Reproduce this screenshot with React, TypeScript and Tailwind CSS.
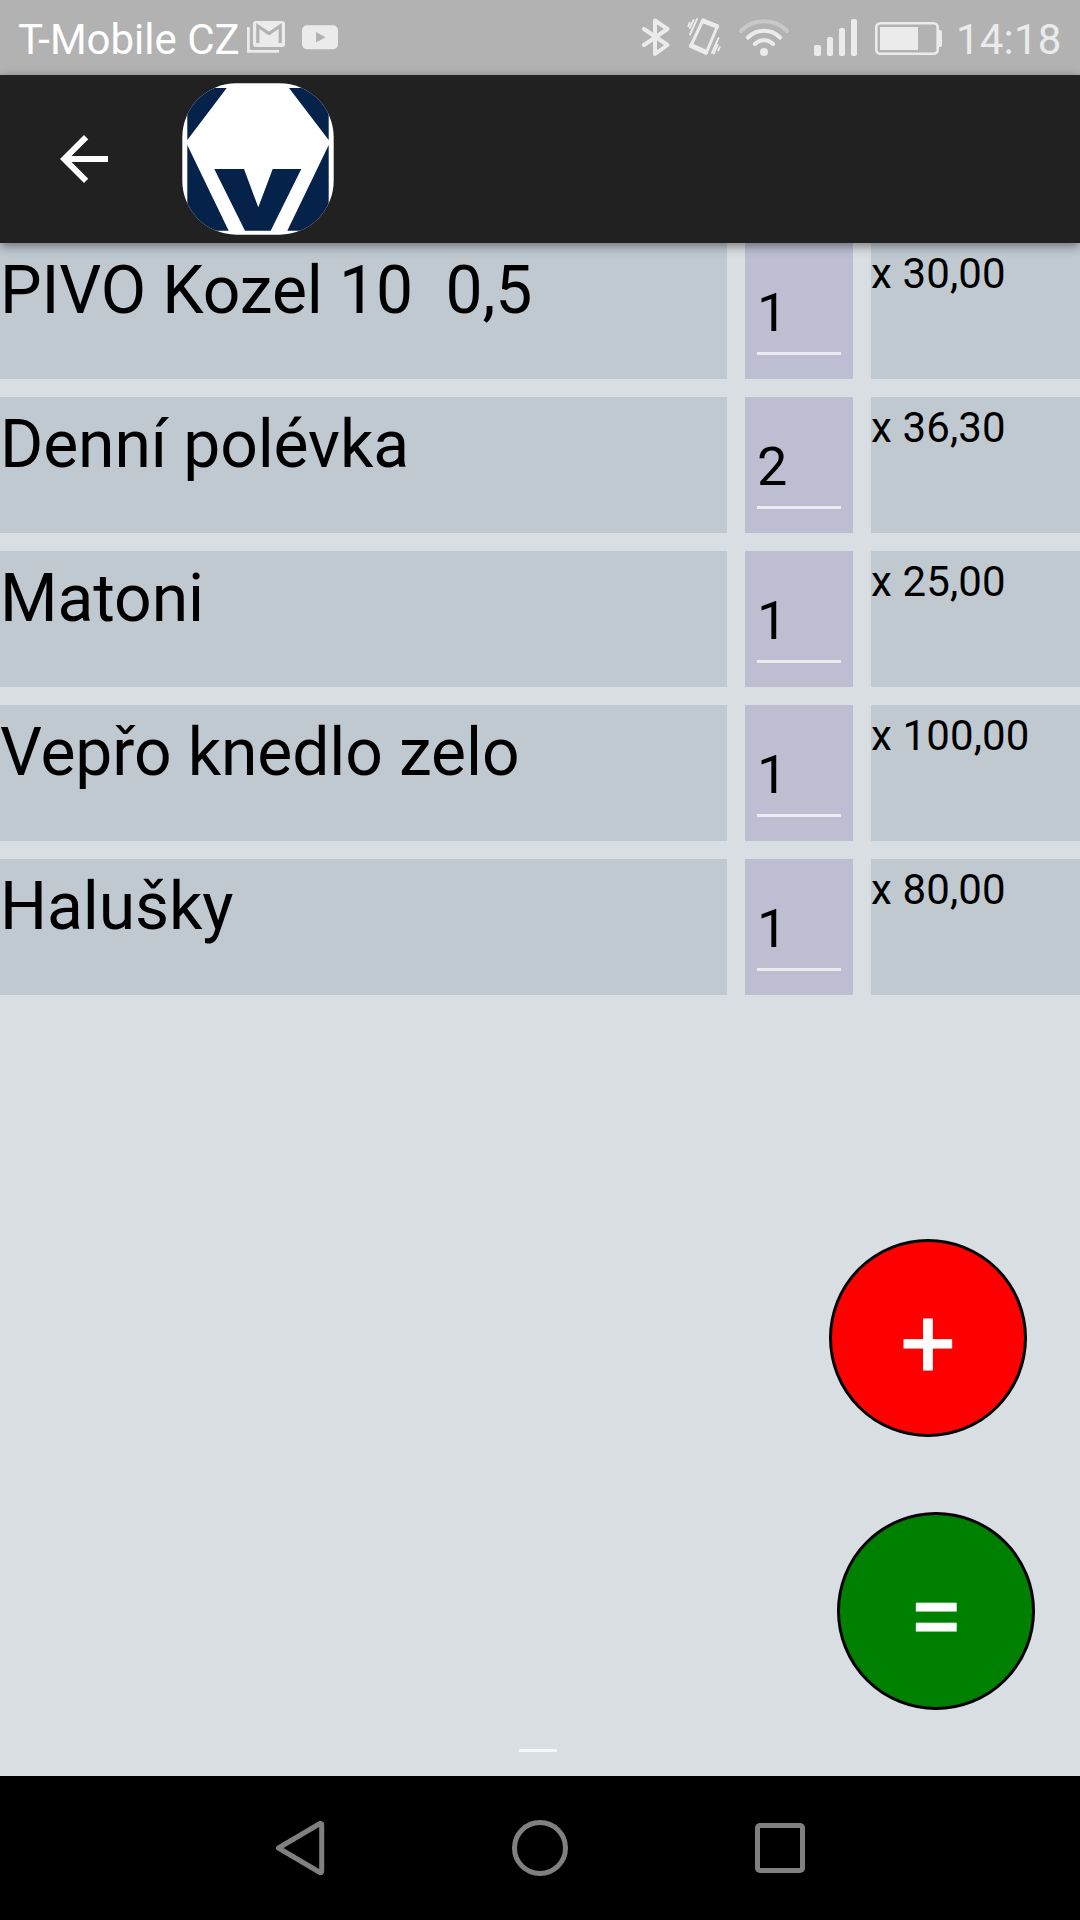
import React from 'react';

interface OrderItem {
  name: string;
  quantity: number;
  price: string;
}

const items: OrderItem[] = [
  { name: 'PIVO Kozel 10  0,5', quantity: 1, price: '30,00' },
  { name: 'Denní polévka', quantity: 2, price: '36,30' },
  { name: 'Matoni', quantity: 1, price: '25,00' },
  { name: 'Vepřo knedlo zelo', quantity: 1, price: '100,00' },
  { name: 'Halušky', quantity: 1, price: '80,00' },
];

const GmailIcon = () => (
  <svg className="w-[38px] h-[33px]" viewBox="0 0 38 33">
    <path d="M1.4 6v24.4H32" fill="none" stroke="#ebebeb" strokeWidth="2.8" />
    <rect x="6" y="0" width="32" height="26" rx="3" fill="#ebebeb" />
    <path d="M10.8 22V5L22 12.5L33.2 5V22" fill="none" stroke="#b2b2b2" strokeWidth="3.2" />
  </svg>
);

const YoutubeIcon = () => (
  <svg className="w-9 h-[25px]" viewBox="0 0 36 25">
    <rect x="0" y="0.3" width="36" height="24" rx="5" fill="#ebebeb" />
    <path d="M14 7v10.4l9.5-5.2z" fill="#b2b2b2" />
  </svg>
);

const BluetoothIcon = () => (
  <svg className="w-7 h-10" viewBox="0 0 28 40">
    <path d="M2 12L25.5 28L13 37V3.5L25.5 12L2 28" fill="none" stroke="#ebebeb" strokeWidth="4" strokeLinejoin="round" strokeLinecap="round" />
  </svg>
);

const VibrateIcon = () => (
  <svg className="w-[34px] h-10" viewBox="0 0 34 40" fill="none" stroke="#ebebeb" strokeLinecap="round">
    <path d="M16 3L30.5 9L19 36.5L3.5 29.5Z" strokeWidth="3" strokeLinejoin="round" />
    <path d="M16 4L30 9.5M4.5 28.5L19 35" strokeWidth="4.5" />
    <path d="M10 2L3 17.5M6.5 3L2.8 11M2.5 6L1.3 9M31.5 21L25 36M32.8 30L31.3 33.5M30.5 28L27 36.5" strokeWidth="1.9" />
  </svg>
);

const WifiIcon = () => (
  <svg className="w-[50px] h-10" viewBox="0 0 50 40" fill="none" strokeWidth="4.2" strokeLinecap="round">
    <path d="M2 13C14 0 36 0 48 13" stroke="#c8c8c8" />
    <path d="M9 19.5C17.5 10.5 32.5 10.5 41 19.5" stroke="#ebebeb" />
    <path d="M16 26C21 21 29 21 34 26" stroke="#ebebeb" />
    <circle cx="25" cy="34" r="4" fill="#ebebeb" stroke="none" />
  </svg>
);

const SignalIcon = () => (
  <svg className="w-11 h-[38px]" viewBox="0 0 44 38" fill="#ebebeb">
    <rect x="0" y="27" width="7" height="11" rx="2" />
    <rect x="13" y="19" width="6" height="19" rx="2" />
    <rect x="25" y="10" width="6" height="28" rx="2" />
    <rect x="37" y="1" width="6" height="37" rx="2" />
  </svg>
);

const BatteryIcon = () => (
  <svg className="w-[67px] h-[33px]" viewBox="0 0 67 33">
    <rect x="1.3" y="1.3" width="61.4" height="30.4" rx="4" fill="none" stroke="#ebebeb" strokeWidth="2.6" />
    <rect x="5" y="5" width="38" height="23" fill="#ebebeb" />
    <path d="M63 8h2q2 0 2 2v13q0 2-2 2h-2z" fill="#ebebeb" />
  </svg>
);

const Logo = () => (
  <svg className="w-[152px] h-[152px]" viewBox="0 0 152 152">
    <defs>
      <clipPath id="logo-shape">
        <rect x="0.3" y="0.3" width="151.4" height="151.4" rx="54" />
      </clipPath>
    </defs>
    <g clipPath="url(#logo-shape)">
      <rect width="152" height="152" fill="#ffffff" />
      <path
        d="M5.3 5H44.7L5.3 57ZM107 5H146.7V57ZM5.3 62L46.7 147.7H5.3ZM146.7 62L105.3 147.7H146.7ZM32.3 86H62L76.3 124.3L90.7 86H119.3L88.7 147.7H63Z"
        fill="#05224b"
      />
    </g>
  </svg>
);

const StatusBar = () => (
  <div className="h-[75px] bg-[#b2b2b2] flex items-start text-[42px] leading-[49px]">
    <span className="ml-[18px] mt-[15px] w-[229px] text-white whitespace-nowrap">T-Mobile CZ</span>
    <div className="mt-[21px]"><GmailIcon /></div>
    <div className="mt-[25px] ml-[17px]"><YoutubeIcon /></div>
    <div className="ml-[304px] mt-[17px]"><BluetoothIcon /></div>
    <div className="ml-[17px] mt-[17px]"><VibrateIcon /></div>
    <div className="ml-[18px] mt-[18px]"><WifiIcon /></div>
    <div className="ml-[25px] mt-[18px]"><SignalIcon /></div>
    <div className="ml-[17px] mt-[22px]"><BatteryIcon /></div>
    <span className="ml-[14px] mt-[15px] text-[#ebebeb] tracking-[0.2px]">14:18</span>
  </div>
);

const Header = () => (
  <header className="relative z-10 h-[168px] bg-[#212121] flex items-center shadow-[0_3px_10px_rgba(0,0,0,0.45)]">
    <svg className="w-[72px] h-[72px] ml-12 mr-[62px]" viewBox="0 0 24 24" fill="#ffffff">
      <path d="M20 11H7.83l5.59-5.59L12 4l-8 8 8 8 1.41-1.41L7.83 13H20v-2z" />
    </svg>
    <Logo />
  </header>
);

const ItemRow: React.FC<{ item: OrderItem }> = ({ item }) => (
  <div className="flex gap-[18px] h-[136px] text-black whitespace-pre">
    <div className="w-[727px] bg-[#c1c9d0] pt-[9px] text-[66px] leading-[77px] tracking-[-0.12px]">{item.name}</div>
    <div className="w-[108px] bg-[#bdbed1] px-3 pt-[38px]">
      <div className="h-[74px] border-b-[3px] border-[#ebebf1] text-[54px] leading-[63px]">{item.quantity}</div>
    </div>
    <div className="flex-1 bg-[#c1c9d0] pt-[6px] text-[42px] leading-[49px] tracking-[0.12px]">x {item.price}</div>
  </div>
);

const NavigationBar = () => (
  <nav className="h-36 bg-black flex items-center">
    <svg className="w-[50px] h-[56px] ml-[275px]" viewBox="0 0 50 56" fill="none" stroke="#808080" strokeWidth="5" strokeLinejoin="round">
      <path d="M3.5 28L45 3.5Q46.7 3 46.7 5V51Q46.7 53 45 52.5Z" />
    </svg>
    <div className="w-14 h-14 ml-[187px] rounded-full border-[5px] border-[#808080]" />
    <div className="w-[50px] h-[50px] ml-[187px] rounded-[5px] border-[5px] border-[#808080]" />
  </nav>
);

export default function App() {
  return (
    <div className="w-[1080px] h-[1920px] flex flex-col overflow-hidden bg-[#d9dee2] font-['Roboto',sans-serif]">
      <StatusBar />
      <Header />
      <main className="flex-1 flex flex-col">
        <div className="flex flex-col gap-[18px]">
          {items.map(item => (
            <ItemRow key={item.name} item={item} />
          ))}
        </div>
        <div className="mt-auto flex flex-col items-end text-white font-normal text-[98px] leading-[116px] [-webkit-text-stroke:0.8px_white]">
          <button className="w-[198px] h-[198px] mr-[53px] pt-[12px] rounded-full border-[3px] border-black bg-[#ff0000]">+</button>
          <button className="w-[198px] h-[198px] mr-[45px] mt-[75px] pt-[12px] rounded-full border-[3px] border-black bg-[#008000]">=</button>
        </div>
        <div className="w-[38px] h-[3px] mt-[39px] mb-6 ml-[519px] bg-[#f4f6f7]" />
      </main>
      <NavigationBar />
    </div>
  );
}
